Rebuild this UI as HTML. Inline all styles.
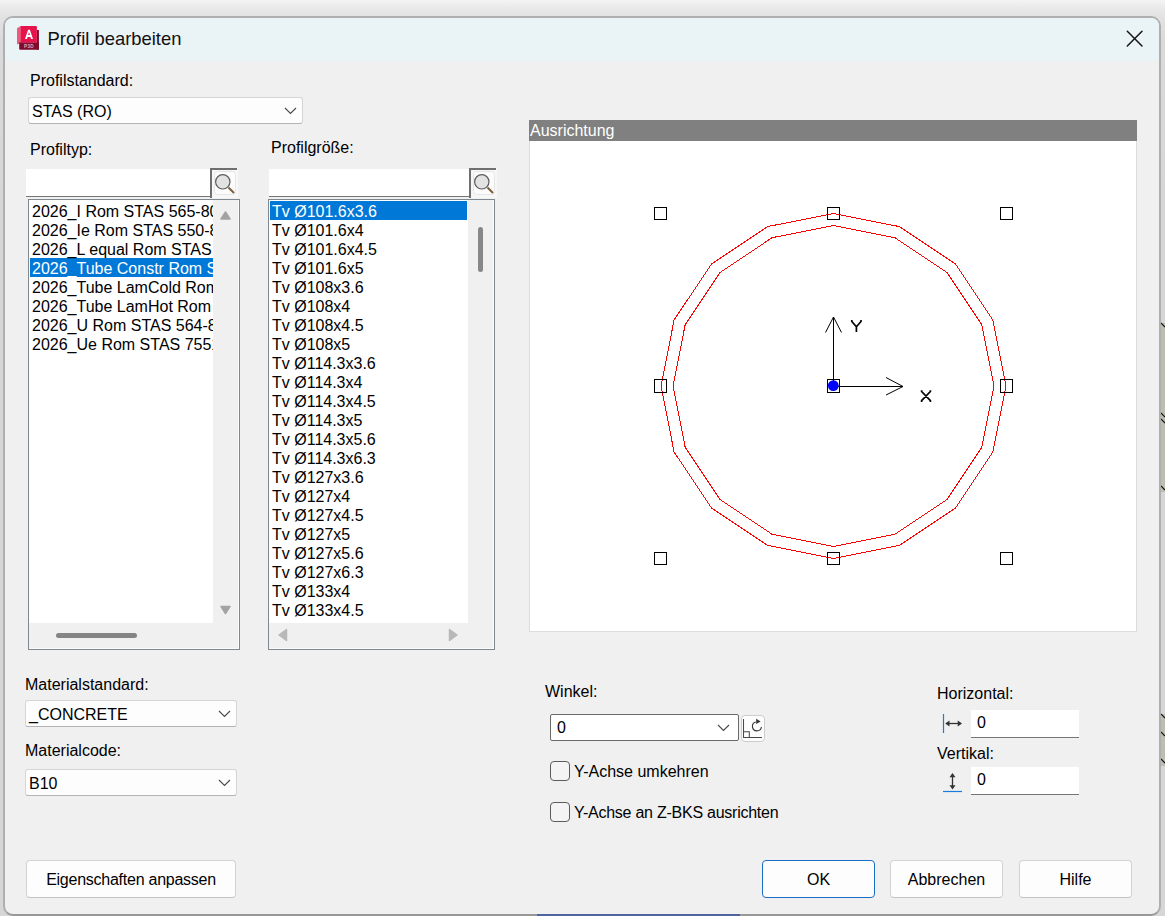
<!DOCTYPE html>
<html><head><meta charset="utf-8">
<style>
*{box-sizing:border-box;margin:0;padding:0}
html,body{width:1165px;height:916px;overflow:hidden;font-family:"Liberation Sans",sans-serif;color:#000}
body{position:relative;background:#e6e6e6}
.abs{position:absolute}
.t{position:absolute;font-size:16px;line-height:16px;white-space:nowrap}
#bg{position:absolute;left:0;top:0;width:1165px;height:916px;background:linear-gradient(#f4f4f4,#e9e9e9 8px,#e3e3e3 16px,#dadada 40px,#d6d6d6 200px)}
#win{position:absolute;left:3px;top:16px;width:1158px;height:900px;background:#f0f0f0;border:2px solid #afafaf;border-bottom-color:#989898;border-radius:10px;overflow:hidden}
#title{position:absolute;left:0;top:0;width:100%;height:43px;background:#eaf3f6}
.combo{position:absolute;background:#fdfdfd;border:1px solid #d5d5d5;border-bottom-color:#b3b3b3;border-radius:3px}
.btn{position:absolute;background:#fdfdfd;border:1px solid #d3d3d3;border-bottom-color:#c2c2c2;border-radius:4px}
.list{position:absolute;background:#f0f0f0;border:1px solid #7f8791;box-shadow:inset -1px -1px 0 #fbfbfb}
.lc{position:absolute;background:#fff;overflow:hidden}
.row{height:19px;line-height:21px;font-size:16px;padding-left:2px;white-space:nowrap}
.sel{background:#0078d7;color:#fff}
.edit{position:absolute;background:#fff;border-bottom:1px solid #767676}
.cb{position:absolute;width:20px;height:20px;border:1px solid #5c5c5c;border-radius:4px;background:#f4f4f4}
</style></head><body>
<div id="bg"></div>
<div id="win"><div id="title"></div></div>

<!-- title -->
<svg class="abs" style="left:14px;top:24px" width="28" height="28" viewBox="0 0 28 28">
  <path d="M3 4.2 L6.8 2 V19 L3 20.6 Z" fill="#ef5a7c"/>
  <path d="M22.9 6 H24.9 V25.7 H22.9 Z" fill="#7e0b2c"/>
  <path d="M5.2 18.3 H24.9 V25.7 H6.2 Q5.2 25.7 5.2 24.7 Z" fill="#7e0b2c"/>
  <path d="M6.6 2 H21.9 Q22.9 2 22.9 3 V18.4 H6.6 Z" fill="#e5124c"/>
  <path d="M11 15 L14.1 5.8 H15.9 L19 15 H17 L16.4 13 H13.6 L13 15 Z M14.1 11 H15.9 L15 8 Z" fill="#fff"/>
  <text x="15" y="23.6" font-size="4.6" font-family="Liberation Sans" font-weight="bold" fill="#e2a8b8" text-anchor="middle" letter-spacing="0.3">P3D</text>
</svg>
<div class="t" style="left:47.5px;top:30px;font-size:18.4px;line-height:18px;color:#111">Profil bearbeiten</div>
<svg class="abs" style="left:1124px;top:28px" width="22" height="22" viewBox="0 0 22 22"><path d="M3.3 3.3 L18 18 M18 3.3 L3.3 18" stroke="#151515" stroke-width="1.5" stroke-linecap="round"/></svg>

<!-- Profilstandard -->
<div class="t" style="left:30px;top:72.5px">Profilstandard:</div>
<div class="combo" style="left:28px;top:97px;width:275px;height:27px"></div>
<div class="t" style="left:32px;top:103.5px">STAS (RO)</div>
<svg class="abs" style="left:284px;top:107.0px" width="13" height="8" viewBox="0 0 13 8"><path d="M1 1 L6.5 6.5 L12 1" fill="none" stroke="#4a4a4a" stroke-width="1.15"/></svg>

<div class="t" style="left:30px;top:142px">Profiltyp:</div>
<div class="t" style="left:271px;top:140px">Profilgröße:</div>

<!-- search 1 -->
<div class="edit" style="left:26px;top:169px;width:186px;height:28px"></div>
<svg class="abs" style="left:210px;top:168px" width="28" height="30" viewBox="0 0 28 30"><rect x="0" y="0" width="28" height="30" fill="#f7f7f7"/><path d="M1 30 V1 H27" fill="none" stroke="#6f6f6f" stroke-width="2"/><rect x="4.5" y="3.5" width="21" height="23" rx="3" fill="#fcfcfc" stroke="#e6e6e6"/><circle cx="12.8" cy="13.8" r="7.2" fill="#e2e2e2" stroke="#5c5c5c" stroke-width="1.2"/><path d="M18.5 19.5 L24 25" stroke="#7b5c3b" stroke-width="1.9"/></svg>
<div class="list" style="left:28px;top:199px;width:212px;height:451px">
  <div class="lc" style="left:0;top:0;width:184px;height:423px"><div style="padding:1px 0 0 1px"><div class="row">2026_I Rom STAS 565-80</div><div class="row">2026_Ie Rom STAS 550-80</div><div class="row">2026_L equal Rom STAS 424-80</div><div class="row sel">2026_Tube Constr Rom STAS 530</div><div class="row">2026_Tube LamCold Rom STAS</div><div class="row">2026_Tube LamHot Rom STAS</div><div class="row">2026_U Rom STAS 564-80</div><div class="row">2026_Ue Rom STAS 7551</div></div></div>
</div>
<svg class="abs" style="left:219px;top:210px" width="14" height="11"><path d="M2 9 L6.5 2 L11 9 Z" fill="#a3a3a3" stroke="#a3a3a3" stroke-width="1.5" stroke-linejoin="round"/></svg>
<svg class="abs" style="left:219px;top:604.5px" width="14" height="11"><path d="M2 1.5 L6.5 8.5 L11 1.5 Z" fill="#a3a3a3" stroke="#a3a3a3" stroke-width="1.5" stroke-linejoin="round"/></svg>
<div class="abs" style="left:56px;top:633px;width:81px;height:5px;border-radius:3px;background:#858585"></div>

<!-- search 2 -->
<div class="edit" style="left:269px;top:169px;width:201px;height:28px"></div>
<svg class="abs" style="left:469px;top:168px" width="28" height="30" viewBox="0 0 28 30"><rect x="0" y="0" width="28" height="30" fill="#f7f7f7"/><path d="M1 30 V1 H27" fill="none" stroke="#6f6f6f" stroke-width="2"/><rect x="4.5" y="3.5" width="21" height="23" rx="3" fill="#fcfcfc" stroke="#e6e6e6"/><circle cx="12.8" cy="13.8" r="7.2" fill="#e2e2e2" stroke="#5c5c5c" stroke-width="1.2"/><path d="M18.5 19.5 L24 25" stroke="#7b5c3b" stroke-width="1.9"/></svg>
<div class="list" style="left:268px;top:199px;width:227px;height:451px">
  <div class="lc" style="left:0;top:0;width:199px;height:423px"><div style="padding:1px 1px 0 1px"><div class="row sel">Tv Ø101.6x3.6</div><div class="row">Tv Ø101.6x4</div><div class="row">Tv Ø101.6x4.5</div><div class="row">Tv Ø101.6x5</div><div class="row">Tv Ø108x3.6</div><div class="row">Tv Ø108x4</div><div class="row">Tv Ø108x4.5</div><div class="row">Tv Ø108x5</div><div class="row">Tv Ø114.3x3.6</div><div class="row">Tv Ø114.3x4</div><div class="row">Tv Ø114.3x4.5</div><div class="row">Tv Ø114.3x5</div><div class="row">Tv Ø114.3x5.6</div><div class="row">Tv Ø114.3x6.3</div><div class="row">Tv Ø127x3.6</div><div class="row">Tv Ø127x4</div><div class="row">Tv Ø127x4.5</div><div class="row">Tv Ø127x5</div><div class="row">Tv Ø127x5.6</div><div class="row">Tv Ø127x6.3</div><div class="row">Tv Ø133x4</div><div class="row">Tv Ø133x4.5</div></div></div>
</div>
<div class="abs" style="left:477.5px;top:227px;width:5.5px;height:45px;border-radius:3px;background:#878787"></div>
<svg class="abs" style="left:277px;top:628px" width="11" height="14"><path d="M9.5 1.5 L2 7 L9.5 12.5 Z" fill="#b8b8b8" stroke="#b8b8b8" stroke-width="1.5" stroke-linejoin="round"/></svg>
<svg class="abs" style="left:448px;top:628px" width="11" height="14"><path d="M1.5 1.5 L9 7 L1.5 12.5 Z" fill="#b8b8b8" stroke="#b8b8b8" stroke-width="1.5" stroke-linejoin="round"/></svg>

<!-- preview -->
<div class="abs" style="left:529px;top:120px;width:608px;height:21px;background:#808080"></div>
<div class="t" style="left:530px;top:122.5px;color:#fff">Ausrichtung</div>
<div class="abs" style="left:529px;top:141px;width:608px;height:491px;background:#fff;border:1px solid #dcdcdc;border-top:none"></div>
<svg class="abs" style="left:0;top:0" width="1165" height="916" shape-rendering="crispEdges">
  <polygon points="833.5,213.5 767.5,226.6 711.5,264.0 674.1,320.0 661.0,386.0 674.1,452.0 711.5,508.0 767.5,545.4 833.5,558.5 899.5,545.4 955.5,508.0 992.9,452.0 1006.0,386.0 992.9,320.0 955.5,264.0 899.5,226.6" fill="none" stroke="#ff0000" stroke-width="1"/>
  <polygon points="833.5,225.5 772.1,237.7 720.0,272.5 685.2,324.6 673.0,386.0 685.2,447.4 720.0,499.5 772.1,534.3 833.5,546.5 894.9,534.3 947.0,499.5 981.8,447.4 994.0,386.0 981.8,324.6 947.0,272.5 894.9,237.7" fill="none" stroke="#ff0000" stroke-width="1"/>
  <g fill="none" stroke="#000" stroke-width="1">
    <rect x="654.5" y="207.5" width="12" height="12"/><rect x="827.5" y="207.5" width="12" height="12"/><rect x="1000.5" y="207.5" width="12" height="12"/>
    <rect x="654.5" y="379.5" width="12" height="13"/><rect x="827.5" y="379.5" width="12" height="13"/><rect x="1000.5" y="379.5" width="12" height="13"/>
    <rect x="654.5" y="552.5" width="12" height="12"/><rect x="827.5" y="552.5" width="12" height="12"/><rect x="1000.5" y="552.5" width="12" height="12"/>
  </g>
</svg>
<svg class="abs" style="left:0;top:0" width="1165" height="916">
  <g fill="none" stroke="#000" stroke-width="1">
    <path d="M833.5 386 V317 M825.5 332.5 L833.5 317 L841.5 332.5"/>
    <path d="M833.5 386.5 H903 M886 377.5 L903 386.5 L886 395"/>
    <path d="M851.8 320 V321.5 L856.4 326.8 L861 321.5 V320 M856.4 326.5 V332" stroke-width="1.7"/>
    <path d="M921.6 390.3 V391.5 L930.4 400.6 V402 M930.4 390.3 V391.5 L921.6 400.6 V402" stroke-width="1.7"/>
  </g>
  <circle cx="833.3" cy="385.6" r="5.4" fill="#0000ff"/>
</svg>

<!-- material -->
<div class="t" style="left:25px;top:677px">Materialstandard:</div>
<div class="combo" style="left:25px;top:700px;width:212px;height:27px"></div>
<div class="t" style="left:29px;top:707px">_CONCRETE</div>
<svg class="abs" style="left:218px;top:710.0px" width="13" height="8" viewBox="0 0 13 8"><path d="M1 1 L6.5 6.5 L12 1" fill="none" stroke="#4a4a4a" stroke-width="1.15"/></svg>
<div class="t" style="left:25px;top:743px">Materialcode:</div>
<div class="combo" style="left:25px;top:769px;width:212px;height:27px"></div>
<div class="t" style="left:29px;top:775.5px">B10</div>
<svg class="abs" style="left:218px;top:779.0px" width="13" height="8" viewBox="0 0 13 8"><path d="M1 1 L6.5 6.5 L12 1" fill="none" stroke="#4a4a4a" stroke-width="1.15"/></svg>

<!-- winkel -->
<div class="t" style="left:545px;top:684px">Winkel:</div>
<div class="abs" style="left:550px;top:714px;width:189px;height:27px;border:1px solid #6a6a6a;border-radius:2px;background:#fff"></div>
<div class="t" style="left:557px;top:720px">0</div>
<svg class="abs" style="left:717px;top:724px" width="13" height="8" viewBox="0 0 13 8"><path d="M1 1 L6.5 6.5 L12 1" fill="none" stroke="#4a4a4a" stroke-width="1.15"/></svg>
<div class="abs" style="left:740.5px;top:715px;width:24.5px;height:26.5px;border:1px solid #cdcdcd;border-radius:4px;background:#fdfdfd"></div>
<svg class="abs" style="left:0;top:0" width="1165" height="916">
  <path d="M743.5 719 V737.5 H762 M743.5 731.8 H749.3 V737.5" fill="none" stroke="#484848" stroke-width="1.05"/>
  <path d="M755.8 722 A4.5 4.5 0 1 0 761.4 727" fill="none" stroke="#333" stroke-width="1.1"/>
  <path d="M756.2 718.8 L760.6 721.6 L756.2 724 Z" fill="#333"/>
</svg>

<div class="cb" style="left:550px;top:761px"></div>
<div class="t" style="left:574px;top:764px">Y-Achse umkehren</div>
<div class="cb" style="left:550px;top:802px"></div>
<div class="t" style="left:574px;top:805px;letter-spacing:-0.25px">Y-Achse an Z-BKS ausrichten</div>

<!-- horizontal / vertikal -->
<div class="t" style="left:937px;top:686px">Horizontal:</div>
<div class="edit" style="left:971px;top:710px;width:108px;height:28px"></div>
<div class="t" style="left:977px;top:715px">0</div>
<svg class="abs" style="left:0;top:0" width="1165" height="916">
  <path d="M943.5 714 V733" stroke="#1a7ddc" stroke-width="1.2"/>
  <path d="M946.5 723.5 H961" stroke="#333" stroke-width="1.3"/>
  <path d="M945.2 723.5 L949.5 720.5 V726.5 Z M962 723.5 L957.7 720.5 V726.5 Z" fill="#333"/>
  <path d="M943 791.5 H962" stroke="#1a7ddc" stroke-width="1.2"/>
  <path d="M952.5 774.5 V788" stroke="#333" stroke-width="1.3"/>
  <path d="M952.5 773 L949.5 777.3 H955.5 Z M952.5 789.6 L949.5 785.3 H955.5 Z" fill="#333"/>
</svg>
<div class="t" style="left:937px;top:746px">Vertikal:</div>
<div class="edit" style="left:971px;top:767px;width:108px;height:28px"></div>
<div class="t" style="left:977px;top:772px">0</div>

<!-- buttons -->
<div class="btn" style="left:26px;top:860px;width:210px;height:38px"></div>
<div class="t" style="left:26px;top:872px;width:210px;text-align:center;letter-spacing:-0.25px">Eigenschaften anpassen</div>
<div class="btn" style="left:762px;top:860px;width:113px;height:38px;border-color:#1a6fc4"></div>
<div class="t" style="left:762px;top:872px;width:113px;text-align:center">OK</div>
<div class="btn" style="left:890px;top:860px;width:113px;height:38px"></div>
<div class="t" style="left:890px;top:872px;width:113px;text-align:center">Abbrechen</div>
<div class="btn" style="left:1019px;top:860px;width:113px;height:38px"></div>
<div class="t" style="left:1019px;top:872px;width:113px;text-align:center">Hilfe</div>

<!-- background bits below window -->
<div class="abs" style="left:1161px;top:323px;width:4px;height:169px;background:#bdbdb0"></div>
<div class="abs" style="left:1161px;top:714px;width:4px;height:52px;background:#bdbdb0"></div>
<svg class="abs" style="left:1161px;top:0" width="4" height="916"><path d="M0 323 L4 327 M0 413 L4 417 M0 419 L4 423 M0 486 L4 490 M0 714 L4 718 M0 732 L4 736 M0 759 L4 763" stroke="#111" stroke-width="1.2"/></svg>
<div class="abs" style="left:537px;top:914px;width:203px;height:2px;background:#4d64a0"></div>
</body></html>
